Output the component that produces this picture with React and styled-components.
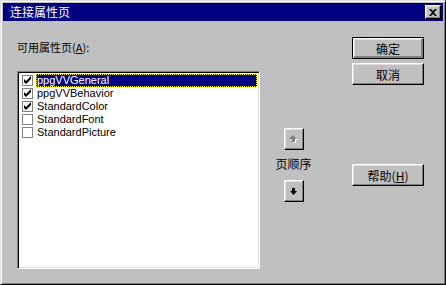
import React from "react";
import styled, { createGlobalStyle } from "styled-components";

const Global = createGlobalStyle`
  html, body { margin: 0; padding: 0; background: #c0c0c0; }
  body { font-family: "Liberation Sans", "Noto Sans CJK SC", sans-serif; }
`;

const CJK = `"Noto Sans CJK SC", "Liberation Sans", sans-serif`;

const Window = styled.div`
  box-sizing: border-box;
  width: 446px;
  height: 285px;
  background: #c0c0c0;
  border: 1px solid;
  border-color: #dfdfdf #000 #000 #dfdfdf;
  box-shadow: inset 1px 1px #fff, inset -1px -1px #808080;
  padding: 2px;
  display: flex;
  flex-direction: column;
`;

const TitleBar = styled.div`
  height: 18px;
  background: #000080;
  display: flex;
  align-items: center;
  justify-content: space-between;
  padding: 0 2px 0 7px;
`;

const Title = styled.span`
  color: #fff;
  font-family: ${CJK};
  font-size: 12px;
  line-height: 14px;
`;

const Raised = styled.div`
  box-sizing: border-box;
  background: #c0c0c0;
  border: 1px solid;
  border-color: #fff #000 #000 #fff;
  box-shadow: inset -1px -1px #808080, inset 1px 1px #dfdfdf;
  display: flex;
  align-items: center;
  justify-content: center;
`;

const CloseButton = styled(Raised)`
  width: 16px;
  height: 14px;
`;

const Body = styled.div`
  flex: 1;
  display: flex;
  padding: 0 0 13px 14px;
`;

const LeftCol = styled.div`
  width: 243px;
  display: flex;
  flex-direction: column;
`;

const Label = styled.div`
  margin-top: 19px;
  font-family: ${CJK};
  font-size: 11px;
  line-height: 14px;
  color: #000;
  u { text-decoration: underline; }
`;

const ListBox = styled.div`
  box-sizing: border-box;
  margin-top: 17px;
  flex: 1;
  background: #fff;
  border: 1px solid;
  border-color: #808080 #fff #fff #808080;
  box-shadow: inset 1px 1px #000, inset -1px -1px #dfdfdf;
  padding: 2px;
  display: flex;
  flex-direction: column;
`;

const Item = styled.div`
  height: 13px;
  display: flex;
  align-items: center;
`;

const Check = styled.div`
  box-sizing: border-box;
  width: 11px;
  height: 11px;
  margin-left: 2px;
  border: 1px solid #808080;
  background: #fff;
  display: flex;
  align-items: center;
  justify-content: center;
`;

const ItemText = styled.div`
  flex: 1;
  margin-left: 3px;
  height: 13px;
  box-sizing: border-box;
  padding-left: 1px;
  font-size: 11px;
  line-height: 12px;
  color: ${(p) => (p.$selected ? "#fff" : "#000")};
  background: ${(p) => (p.$selected ? "#000080" : "transparent")};
  outline: ${(p) => (p.$selected ? "1px dotted #ffff00" : "none")};
  outline-offset: -1px;
  white-space: nowrap;
`;

const MidCol = styled.div`
  margin-left: 15px;
  width: 37px;
  display: flex;
  flex-direction: column;
  align-items: center;
  padding-top: 107px;
`;

const ArrowButton = styled(Raised)`
  width: 20px;
  height: 22px;
`;

const OrderLabel = styled.div`
  margin: 7px 0 9px;
  font-family: ${CJK};
  font-size: 12px;
  line-height: 14px;
  color: #000;
  white-space: nowrap;
`;

const RightCol = styled.div`
  margin-left: 40px;
  width: 72px;
  display: flex;
  flex-direction: column;
  padding-top: 16px;
`;

const PushButton = styled(Raised)`
  width: 72px;
  height: 22px;
  font-family: ${CJK};
  font-size: 12px;
  color: #000;
  margin-top: ${(p) => p.$gap || 0}px;
  ${(p) =>
    p.$default &&
    `
    border-color: #000;
    box-shadow: inset 1px 1px #fff, inset -1px -1px #808080, inset -2px -2px #808080, inset 2px 2px #dfdfdf;
  `}
  u { text-decoration: underline; }
`;

const CheckMark = () => (
  <svg width="9" height="9" viewBox="0 0 9 9">
    <path d="M1 3v3l2 2 5-5V0L3 5z" fill="#000" />
  </svg>
);

const UpArrow = () => (
  <svg width="9" height="8" viewBox="0 0 9 8">
    <path d="M5 1l4 4H7v3H4V5H2z" fill="#fff" />
    <path d="M4 0l4 4H6v3H3V4H0z" fill="#808080" />
  </svg>
);

const DownArrow = () => (
  <svg width="7" height="7" viewBox="0 0 7 7">
    <path d="M2 0h3v3h2L3.5 7 0 3h2z" fill="#000" />
  </svg>
);

const CloseX = () => (
  <svg width="8" height="7" viewBox="0 0 8 7">
    <path d="M0 0h2l2 2 2-2h2L5 3.5 8 7H6L4 5 2 7H0l3-3.5z" fill="#000" />
  </svg>
);

const items = [
  { name: "ppgVVGeneral", checked: true, selected: true },
  { name: "ppgVVBehavior", checked: true },
  { name: "StandardColor", checked: true },
  { name: "StandardFont", checked: false },
  { name: "StandardPicture", checked: false },
];

export default function App() {
  return (
    <>
      <Global />
      <Window>
        <TitleBar>
          <Title>连接属性页</Title>
          <CloseButton>
            <CloseX />
          </CloseButton>
        </TitleBar>
        <Body>
          <LeftCol>
            <Label>
              可用属性页(<u>A</u>):
            </Label>
            <ListBox>
              {items.map((it) => (
                <Item key={it.name}>
                  <Check>{it.checked && <CheckMark />}</Check>
                  <ItemText $selected={it.selected}>{it.name}</ItemText>
                </Item>
              ))}
            </ListBox>
          </LeftCol>
          <MidCol>
            <ArrowButton>
              <UpArrow />
            </ArrowButton>
            <OrderLabel>页顺序</OrderLabel>
            <ArrowButton>
              <DownArrow />
            </ArrowButton>
          </MidCol>
          <RightCol>
            <PushButton $default>确定</PushButton>
            <PushButton $gap={4}>取消</PushButton>
            <PushButton $gap={79}>
              帮助(<u>H</u>)
            </PushButton>
          </RightCol>
        </Body>
      </Window>
    </>
  );
}
